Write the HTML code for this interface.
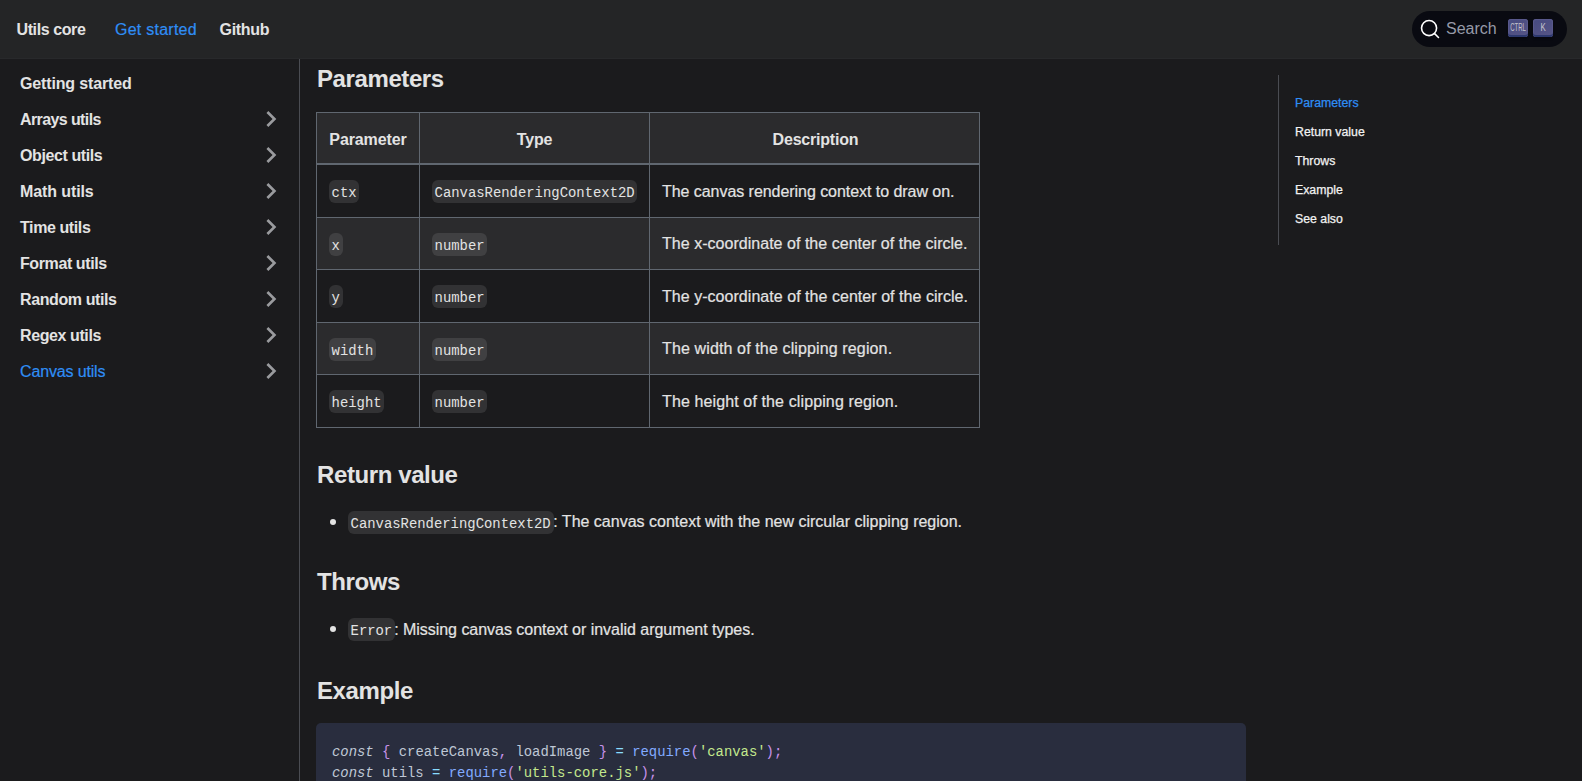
<!DOCTYPE html>
<html lang="en">
<head>
<meta charset="utf-8">
<title>Canvas utils | Utils core</title>
<style>
*{box-sizing:border-box;margin:0;padding:0}
html,body{width:1582px;height:781px;overflow:hidden;background:#1b1b1d;color:#e3e3e3;font-family:"Liberation Sans",sans-serif;font-size:16px}
.abs{position:absolute;white-space:nowrap}
/* navbar */
#nav{position:absolute;left:0;top:0;width:1582px;height:59px;background:#242526;border-bottom:1px solid #28292b}
#nav .brand{left:16.5px;top:21px;font-weight:bold;font-size:16px;line-height:18px;color:#e3e3e3;letter-spacing:-0.4px}
#nav .l1{left:115px;top:21px;font-size:16px;line-height:18px;color:#2f8ef5;letter-spacing:0.25px;-webkit-text-stroke:0.2px #2f8ef5}
#nav .l2{left:219.5px;top:21px;font-weight:bold;font-size:16px;line-height:18px;color:#e3e3e3;letter-spacing:-0.3px}
#search{position:absolute;left:1412px;top:11px;width:155px;height:36px;border-radius:18px;background:#090a11}
#search svg{position:absolute;left:8.3px;top:8px}
#search .ph{left:34px;top:9px;font-size:16px;line-height:18px;color:#969aa8}
.key{position:absolute;top:8px;width:20px;height:18px;border-radius:3px;background:linear-gradient(-26.5deg,#575586,#464a80);box-shadow:inset 0 -2px 0 0 #2d386e,inset 0 0 1px 1px #5a5a8c,0 2px 2px 0 rgba(3,4,9,.3);color:#c4c4cc;font-size:10px;line-height:17px;text-align:center;font-family:"Liberation Sans",sans-serif}
/* sidebar */
#side{position:absolute;left:0;top:59px;width:300px;height:722px;border-right:1px solid #4a4c52}
.si{position:absolute;left:20px;font-size:16px;line-height:18px;font-weight:bold;color:#e3e3e3;letter-spacing:-0.4px;white-space:nowrap}
.si.act{font-weight:normal;color:#2f8ef5;letter-spacing:-0.15px;-webkit-text-stroke:0.2px #2f8ef5}
.chev{position:absolute}
/* main */
h2{position:absolute;left:317px;font-size:24px;line-height:28px;font-weight:bold;color:#e3e3e3;letter-spacing:-0.4px;white-space:nowrap}
code{font-family:"Liberation Mono",monospace;font-size:13.9px;background:rgba(255,255,255,.1);border-radius:6px;padding:1.8px 2.6px 0;color:#e3e3e3;display:inline-block;line-height:23px;height:23px;vertical-align:top}
.cc{line-height:0}
#tbl{position:absolute;left:316px;top:112px;width:664px;height:316px}
.hl{position:absolute;background:#606770;height:1px}
.vl{position:absolute;background:#606770;width:1px}
.row{position:absolute;left:316px;width:664px}
.cell{position:absolute;white-space:nowrap}
.th{font-weight:bold;font-size:16px;line-height:18px;text-align:center;letter-spacing:-0.2px}
.td{font-size:16px;line-height:18px;-webkit-text-stroke:0.2px #e3e3e3}
.bul{position:absolute;left:329.7px;width:6.6px;height:6.6px;border-radius:50%;background:#e3e3e3}
.li{position:absolute;left:348px;font-size:16px;line-height:22px;white-space:nowrap;height:22px;-webkit-text-stroke:0.2px #e3e3e3}
.li code{-webkit-text-stroke:0}
#codeblk{position:absolute;left:316px;top:723px;width:930px;height:100px;background:#292d3e;border-radius:5px}
#codeblk pre{position:absolute;left:16px;top:18.5px;font-family:"Liberation Mono",monospace;font-size:13.9px;line-height:21.7px;color:#bfc7d5}
.kw{font-style:italic}
.pu{color:#c792ea}
.op{color:#89ddff}
.fn{color:#82aaff}
.st{color:#c3e88d}
/* toc */
#toc{position:absolute;left:1278px;top:75px;width:1px;height:170px;background:#4a4c52}
.ti{position:absolute;left:1295px;font-size:12.3px;line-height:14px;color:#f2f2f2;white-space:nowrap;-webkit-text-stroke:0.25px #f2f2f2}
.ti.act{-webkit-text-stroke:0.25px #2f8ef5}
.ti.act{color:#2f8ef5}
</style>
</head>
<body>
<div id="nav">
  <div class="abs brand">Utils core</div>
  <div class="abs l1">Get started</div>
  <div class="abs l2">Github</div>
  <div id="search">
    <svg width="20" height="20" viewBox="0 0 20 20"><path d="M14.386 14.386l4.0877 4.0877-4.0877-4.0877c-2.9418 2.9419-7.7115 2.9419-10.6533 0-2.9419-2.9418-2.9419-7.7115 0-10.6533 2.9418-2.9419 7.7115-2.9419 10.6533 0 2.9419 2.9418 2.9419 7.7115 0 10.6533z" stroke="#ffffff" fill="none" stroke-width="1.6" stroke-linecap="round" stroke-linejoin="round"/></svg>
    <div class="abs ph">Search</div>
    <div class="key" style="left:96px"><span style="position:absolute;left:50%;top:0;transform:translateX(-50%) scaleX(0.6);font-size:10px">CTRL</span></div>
    <div class="key" style="left:121px"><span style="position:absolute;left:50%;top:0;transform:translateX(-50%) scaleX(0.78);font-size:10px">K</span></div>
  </div>
</div>

<div id="side">
  <div class="si" style="top:16px;letter-spacing:-0.15px">Getting started</div>
  <div class="si" style="top:52px;letter-spacing:-0.6px">Arrays utils</div>
  <div class="si" style="top:88px">Object utils</div>
  <div class="si" style="top:124px;letter-spacing:-0.1px">Math utils</div>
  <div class="si" style="top:160px">Time utils</div>
  <div class="si" style="top:196px">Format utils</div>
  <div class="si" style="top:232px">Random utils</div>
  <div class="si" style="top:268px">Regex utils</div>
  <div class="si act" style="top:304px">Canvas utils</div>
  <svg class="chev" style="left:254.5px;top:44px" width="32" height="32" viewBox="0 0 24 24"><path fill="#9a9b9e" transform="rotate(90 12 12)" d="M7.41 15.41L12 10.83l4.59 4.58L18 14l-6-6-6 6z"/></svg>
  <svg class="chev" style="left:254.5px;top:80px" width="32" height="32" viewBox="0 0 24 24"><path fill="#9a9b9e" transform="rotate(90 12 12)" d="M7.41 15.41L12 10.83l4.59 4.58L18 14l-6-6-6 6z"/></svg>
  <svg class="chev" style="left:254.5px;top:116px" width="32" height="32" viewBox="0 0 24 24"><path fill="#9a9b9e" transform="rotate(90 12 12)" d="M7.41 15.41L12 10.83l4.59 4.58L18 14l-6-6-6 6z"/></svg>
  <svg class="chev" style="left:254.5px;top:152px" width="32" height="32" viewBox="0 0 24 24"><path fill="#9a9b9e" transform="rotate(90 12 12)" d="M7.41 15.41L12 10.83l4.59 4.58L18 14l-6-6-6 6z"/></svg>
  <svg class="chev" style="left:254.5px;top:188px" width="32" height="32" viewBox="0 0 24 24"><path fill="#9a9b9e" transform="rotate(90 12 12)" d="M7.41 15.41L12 10.83l4.59 4.58L18 14l-6-6-6 6z"/></svg>
  <svg class="chev" style="left:254.5px;top:224px" width="32" height="32" viewBox="0 0 24 24"><path fill="#9a9b9e" transform="rotate(90 12 12)" d="M7.41 15.41L12 10.83l4.59 4.58L18 14l-6-6-6 6z"/></svg>
  <svg class="chev" style="left:254.5px;top:260px" width="32" height="32" viewBox="0 0 24 24"><path fill="#9a9b9e" transform="rotate(90 12 12)" d="M7.41 15.41L12 10.83l4.59 4.58L18 14l-6-6-6 6z"/></svg>
  <svg class="chev" style="left:254.5px;top:296px" width="32" height="32" viewBox="0 0 24 24"><path fill="#9a9b9e" transform="rotate(90 12 12)" d="M7.41 15.41L12 10.83l4.59 4.58L18 14l-6-6-6 6z"/></svg>
</div>

<div id="main">
  <h2 style="top:65px">Parameters</h2>
  <div id="tbl">
<div style="position:absolute;left:0;top:0;width:664px;height:52px;background:#2b2b2d"></div>
<div style="position:absolute;left:0;top:105px;width:664px;height:53px;background:#2b2b2d"></div>
<div style="position:absolute;left:0;top:210px;width:664px;height:53px;background:#2b2b2d"></div>
<div class="hl" style="left:0;top:0;width:664px"></div>
<div class="hl" style="left:0;top:315px;width:664px"></div>
<div class="vl" style="left:0;top:0;height:316px"></div>
<div class="vl" style="left:663px;top:0;height:316px"></div>
<div class="vl" style="left:103px;top:0;height:316px"></div>
<div class="vl" style="left:333px;top:0;height:316px"></div>
<div class="hl" style="left:0;top:51px;width:664px;height:2px"></div>
<div class="hl" style="left:0;top:105px;width:664px"></div>
<div class="hl" style="left:0;top:157px;width:664px"></div>
<div class="hl" style="left:0;top:210px;width:664px"></div>
<div class="hl" style="left:0;top:262px;width:664px"></div>
<div class="cell th" style="left:1px;top:18.5px;width:102px;letter-spacing:-0.1px">Parameter</div>
<div class="cell th" style="left:104px;top:18.5px;width:229px">Type</div>
<div class="cell th" style="left:335px;top:18.5px;width:329px">Description</div>
<div class="cell cc" style="left:13px;top:68px"><code>ctx</code></div>
<div class="cell cc" style="left:116px;top:68px"><code>CanvasRenderingContext2D</code></div>
<div class="cell td" style="left:346px;top:71px;letter-spacing:-0.05px">The canvas rendering context to draw on.</div>
<div class="cell cc" style="left:13px;top:121px"><code>x</code></div>
<div class="cell cc" style="left:116px;top:121px"><code>number</code></div>
<div class="cell td" style="left:346px;top:123px;letter-spacing:0.03px">The x-coordinate of the center of the circle.</div>
<div class="cell cc" style="left:13px;top:173px"><code>y</code></div>
<div class="cell cc" style="left:116px;top:173px"><code>number</code></div>
<div class="cell td" style="left:346px;top:176px;letter-spacing:0.04px">The y-coordinate of the center of the circle.</div>
<div class="cell cc" style="left:13px;top:226px"><code>width</code></div>
<div class="cell cc" style="left:116px;top:226px"><code>number</code></div>
<div class="cell td" style="left:346px;top:228px;letter-spacing:0.13px">The width of the clipping region.</div>
<div class="cell cc" style="left:13px;top:278px"><code>height</code></div>
<div class="cell cc" style="left:116px;top:278px"><code>number</code></div>
<div class="cell td" style="left:346px;top:281px;letter-spacing:0.12px">The height of the clipping region.</div>
</div>
  <div class="bul" style="top:518.8px"></div>
  <div class="li" style="top:511.45px"><code style="position:relative;top:-0.15px;padding-right:3.6px;margin-right:-1px">CanvasRenderingContext2D</code>: The canvas context with the new circular clipping region.</div>
  <div class="bul" style="top:625.5px"></div>
  <div class="li" style="top:618.75px;letter-spacing:-0.03px"><code style="position:relative;top:-0.85px;padding-right:3.2px;margin-right:-1.2px">Error</code>: Missing canvas context or invalid argument types.</div>
  <div id="codeblk"><pre><span class="kw">const</span> <span class="pu">{</span> createCanvas<span class="pu">,</span> loadImage <span class="pu">}</span> <span class="op">=</span> <span class="fn">require</span><span class="pu">(</span><span class="st">'canvas'</span><span class="pu">);</span>
<span class="kw">const</span> utils <span class="op">=</span> <span class="fn">require</span><span class="pu">(</span><span class="st">'utils-core.js'</span><span class="pu">);</span></pre></div>

  <h2 style="top:461px">Return value</h2>
  <h2 style="top:567.5px">Throws</h2>
  <h2 style="top:676.5px">Example</h2>
</div>

<div id="toc"></div>
<div class="ti act" style="top:96px">Parameters</div>
<div class="ti" style="top:125px">Return value</div>
<div class="ti" style="top:154px">Throws</div>
<div class="ti" style="top:183px">Example</div>
<div class="ti" style="top:212px">See also</div>
</body>
</html>
